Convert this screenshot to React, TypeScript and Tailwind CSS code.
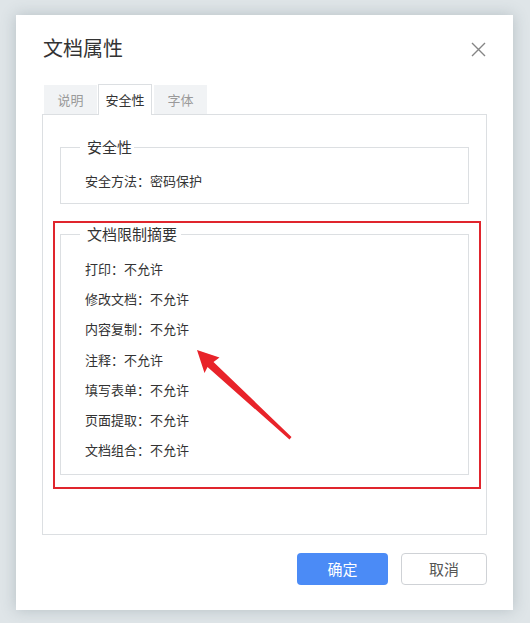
const font = { fontFamily: '"Noto Sans CJK SC", "Noto Sans", sans-serif' };

const limits = [
  ["打印", "不允许"],
  ["修改文档", "不允许"],
  ["内容复制", "不允许"],
  ["注释", "不允许"],
  ["填写表单", "不允许"],
  ["页面提取", "不允许"],
  ["文档组合", "不允许"],
];

function Tab({ label, active }: { label: string; active?: boolean }) {
  if (active) {
    return (
      <div className="relative z-10 -mb-px flex h-[31px] w-[54px] items-center justify-center border border-b-0 border-[#dcdfe2] bg-white text-[13px] text-[#333]">
        {label}
      </div>
    );
  }
  return (
    <div className="flex h-[29px] w-[53px] items-center justify-center bg-[#f1f3f5] text-[13px] text-[#9a9a9a]">
      {label}
    </div>
  );
}

export default function App() {
  return (
    <div className="h-[623px] w-[530px] overflow-hidden bg-[#dfe5e8] pl-[16px] pt-[15px]" style={font}>
      <div className="relative h-[595px] w-[497px] bg-white px-[26px] pt-[19px] shadow-[0_0_14px_rgba(60,80,90,0.25)]">
        <div className="flex items-center justify-between">
          <h1 className="ml-px text-[20px] leading-[28px] text-[#333]">文档属性</h1>
          <button className="mr-px mt-[2px] text-[#858585]">
            <svg width="15" height="15" viewBox="0 0 15 15" fill="none" stroke="currentColor" strokeWidth="1.4">
              <path d="M1 1 L14 14 M14 1 L1 14" />
            </svg>
          </button>
        </div>

        <div className="mt-[22px] flex items-end gap-[1px] pl-[2px]">
          <Tab label="说明" />
          <Tab label="安全性" active />
          <div className="ml-px">
            <Tab label="字体" />
          </div>
        </div>

        <div className="relative h-[421px] border border-[#dcdfe2] px-[17px] pt-[22px]">
          <fieldset className="border border-[#dcdfe2] px-0 pb-[12px]">
            <legend className="ml-[19px] pl-[7px] pr-[2px] text-[15px] leading-[20px] text-[#333]">安全性</legend>
            <p className="mt-[14px] pl-[24px] text-[13px] leading-[20px] text-[#333]">安全方法：密码保护</p>
          </fieldset>

          <fieldset className="mt-[20px] border border-[#dcdfe2] px-0 pb-[9px]">
            <legend className="ml-[19px] pl-[7px] pr-[4px] text-[15px] leading-[20px] text-[#333]">文档限制摘要</legend>
            <ul className="mt-[10px] pl-[24px]">
              {limits.map(([name, value]) => (
                <li key={name} className="text-[13px] leading-[30.2px] text-[#333]">
                  {name}：{value}
                </li>
              ))}
            </ul>
          </fieldset>

          <div className="pointer-events-none absolute left-[10px] top-[106px] h-[268px] w-[428px] border-2 border-[#e0252d]" />

          <svg
            className="pointer-events-none absolute left-[142px] top-[220px]"
            width="110"
            height="110"
            viewBox="0 0 110 110"
          >
            <polygon
              points="12,15 34.5,22.5 28.5,27 106.5,102 104.5,104.5 22.5,32 19.5,38"
              fill="#e8232a"
            />
          </svg>
        </div>

        <div className="mt-[18px] flex justify-end gap-[13px]">
          <button className="h-[32px] w-[91px] rounded-[4px] bg-[#4b8bf6] text-[15px] text-white">确定</button>
          <button className="h-[32px] w-[86px] rounded-[4px] border border-[#cfd2d6] bg-white text-[15px] text-[#555]">
            取消
          </button>
        </div>
      </div>
    </div>
  );
}
